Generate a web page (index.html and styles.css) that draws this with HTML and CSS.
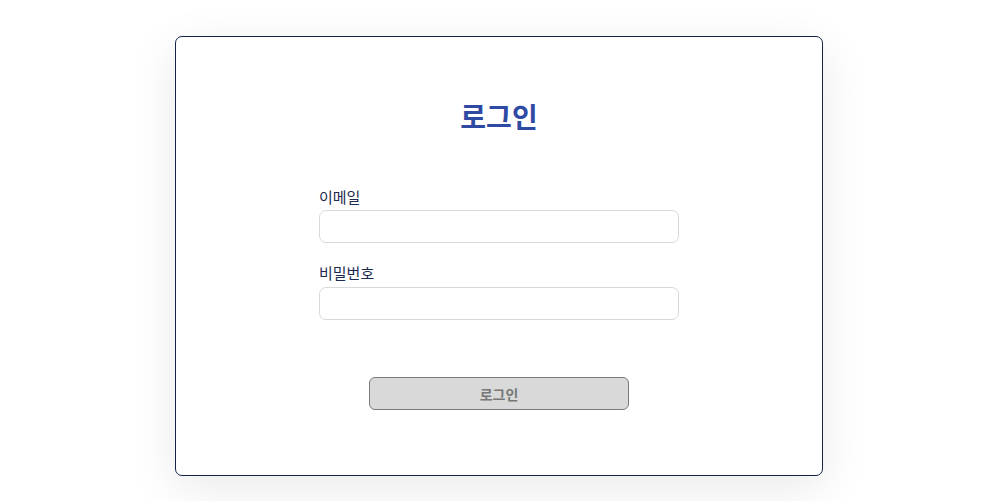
FILE: index.html
```html
<!DOCTYPE html>
<html lang="ko">
<head>
<meta charset="utf-8">
<title>로그인</title>
<link rel="stylesheet" href="styles.css">
</head>
<body>
<main class="page">
  <section class="card">
    <h1 class="title">로그인</h1>
    <form class="form">
      <div class="field">
        <label class="label" for="email">이메일</label>
        <input class="input" id="email" type="email">
      </div>
      <div class="field">
        <label class="label" for="pw">비밀번호</label>
        <input class="input" id="pw" type="password">
      </div>
      <button class="btn" type="button" disabled>로그인</button>
    </form>
  </section>
</main>
</body>
</html>
```
FILE: styles.css
```css
* { box-sizing: border-box; }
html, body { margin: 0; padding: 0; background: #ffffff; }
body {
  font-family: "Noto Sans CJK KR", "Noto Sans", sans-serif;
}
.page {
  min-height: 501px;
  padding: 36px 0 25px 7px;
  display: flex;
  justify-content: center;
  align-items: flex-start;
}
.card {
  width: 648px;
  height: 440px;
  border: 1px solid #15234a;
  border-radius: 7px;
  background: #ffffff;
  box-shadow: 0 12px 48px rgba(0, 0, 0, 0.09);
  padding: 59px 0 0;
  display: flex;
  flex-direction: column;
  align-items: center;
}
.title {
  margin: 0;
  font-size: 28px;
  line-height: 40px;
  font-weight: 700;
  color: #2f4aa3;
}
.form {
  width: 360px;
  margin-top: 50px;
  display: flex;
  flex-direction: column;
}
.field {
  display: flex;
  flex-direction: column;
}
.field + .field { margin-top: 19px; }
.label {
  font-size: 15px;
  line-height: 22px;
  color: #1b2a4e;
  margin-bottom: 2px;
}
.field + .field .label { margin-bottom: 3px; }
.input {
  height: 33px;
  border: 1px solid #d9d9d9;
  border-radius: 7px;
  background: #fff;
  padding: 0 10px;
  font: inherit;
}
.btn {
  align-self: center;
  margin-top: 57px;
  width: 260px;
  height: 33px;
  border: 1px solid #7a7a7a;
  border-radius: 6px;
  background: #d9d9d9;
  color: #777777;
  font-family: inherit;
  font-size: 14px;
  font-weight: 700;
  padding: 0;
}
```
